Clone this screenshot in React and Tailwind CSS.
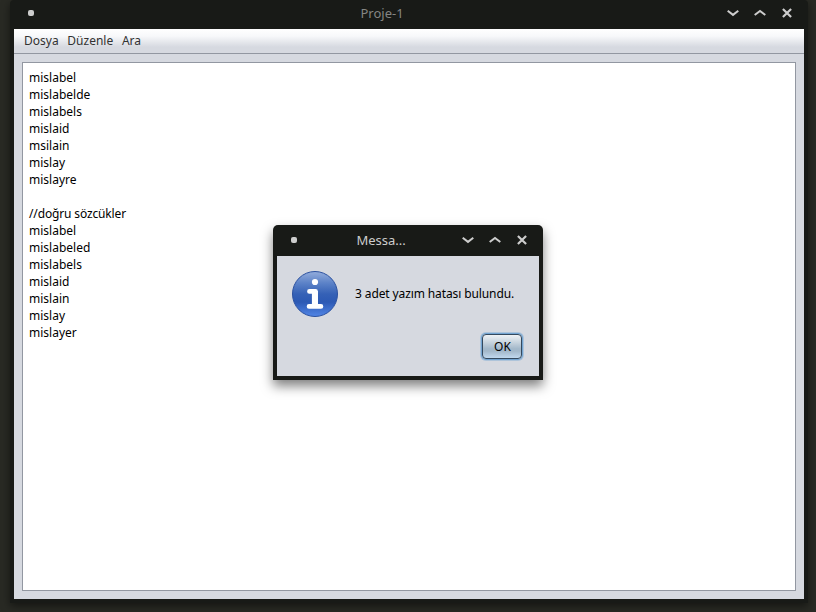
const lines = [
  'mislabel', 'mislabelde', 'mislabels', 'mislaid', 'msilain', 'mislay', 'mislayre', '',
  '//doğru sözcükler', 'mislabel', 'mislabeled', 'mislabels', 'mislaid', 'mislain', 'mislay', 'mislayer',
];

function WindowControls() {
  return (
    <svg width="66" height="12" viewBox="0 0 66 12" fill="none" stroke="#cdcdcd" strokeWidth="2" strokeLinecap="butt">
      <path d="M0.7 3.8 L6 7.9 L11.3 3.8" />
      <path d="M27.7 8 L33 3.9 L38.3 8" />
      <path d="M55.9 2 L64.1 10 M64.1 2 L55.9 10" strokeWidth="2.2" />
    </svg>
  );
}

function InfoIcon() {
  return (
    <svg width="48" height="48" viewBox="0 0 48 48">
      <defs>
        <linearGradient id="infoFill" x1="0" y1="0" x2="0" y2="1">
          <stop offset="0" stopColor="#94addc" />
          <stop offset="0.25" stopColor="#5d83c8" />
          <stop offset="0.5" stopColor="#3561b6" />
          <stop offset="0.68" stopColor="#2c59b4" />
          <stop offset="1" stopColor="#5286e6" />
        </linearGradient>
      </defs>
      <circle cx="24" cy="24" r="22.5" fill="url(#infoFill)" stroke="#2b51a0" />
      <circle cx="24" cy="12" r="3.1" fill="#fff" />
      <path d="M18.4 21.4 H24.6 V36 M18 36.4 H30" fill="none" stroke="#fff" strokeWidth="4.6" strokeLinecap="round" strokeLinejoin="round" />
      <path d="M23.9 21 V36" stroke="#fff" strokeWidth="6" />
    </svg>
  );
}

function Dialog() {
  return (
    <div className="absolute left-[273px] top-[225px] flex h-[155px] w-[270px] flex-col rounded-t-[5px] bg-[#181a17] px-1 pb-1 shadow-[0_6px_12px_rgba(0,0,0,0.5)]">
      <div className="flex h-[31px] shrink-0 items-center pb-[2px] pl-[14px] pr-[11px]">
        <span className="size-[6px] rounded-[2px] bg-[#cdcdcd]" />
        <span className="flex-1 pl-[59.5px] text-[13px] leading-[18px] text-[#cdcdcd]">Messa...</span>
        <WindowControls />
      </div>
      <div className="flex flex-1 flex-col bg-[#d6d9e0]">
        <div className="flex h-[75px] items-center pl-[14px]">
          <InfoIcon />
          <span className="ml-[16px] whitespace-nowrap tracking-[-0.11px]">3 adet yazım hatası bulundu.</span>
        </div>
        <button className="mr-[17px] mt-[3px] flex h-[25px] w-[40px] items-center justify-center self-end rounded-[4px] border border-[#34495e] bg-[linear-gradient(#eff2f5_0%,#c4d1dc_35%,#a3b8ca_60%,#a3b8ca_70%,#c0d8ee_100%)] pl-px shadow-[0_0_0_1px_#73a4d1,0_0_0_2px_#73a4d166]">OK</button>
      </div>
    </div>
  );
}

export default function App() {
  return (
    <div className="relative h-[612px] w-[816px] overflow-hidden bg-[#292a24] pb-[9px] pl-[10px] pr-[8px] font-['Noto_Sans',sans-serif] text-[12px] leading-[17px] text-black">
      <div className="flex h-full flex-col rounded-t-[4px] bg-[#181a17] px-1 pb-1 shadow-[0_3px_9px_rgba(0,0,0,0.5)]">
        <div className="flex h-[29px] shrink-0 items-center pb-[3px] pl-[14px] pr-[11px]">
          <span className="size-[6px] rounded-[2px] bg-[#cdcdcd]" />
          <span className="flex-1 pl-[326.5px] text-[13px] leading-[18px] text-[#858683]">Proje-1</span>
          <WindowControls />
        </div>
        <div className="flex h-[25px] shrink-0 items-center gap-[8.7px] border-b border-[#9297a1] bg-[linear-gradient(#ffffff_0%,#f7f8fa_30%,#d6d9e0_75%)] pb-[2px] pl-[10px] text-[#323232]">
          <span>Dosya</span>
          <span>Düzenle</span>
          <span>Ara</span>
        </div>
        <div className="flex min-h-0 flex-1 bg-[#d6d9e0] p-2">
          <div className="flex-1 border border-[#9297a1] bg-white px-[6px] pt-[6px]">
            {lines.map((line, i) => (
              <div key={i} className={line.startsWith('//') ? 'h-[17px] tracking-[-0.14px]' : 'h-[17px]'}>{line}</div>
            ))}
          </div>
        </div>
      </div>
      <Dialog />
    </div>
  );
}
